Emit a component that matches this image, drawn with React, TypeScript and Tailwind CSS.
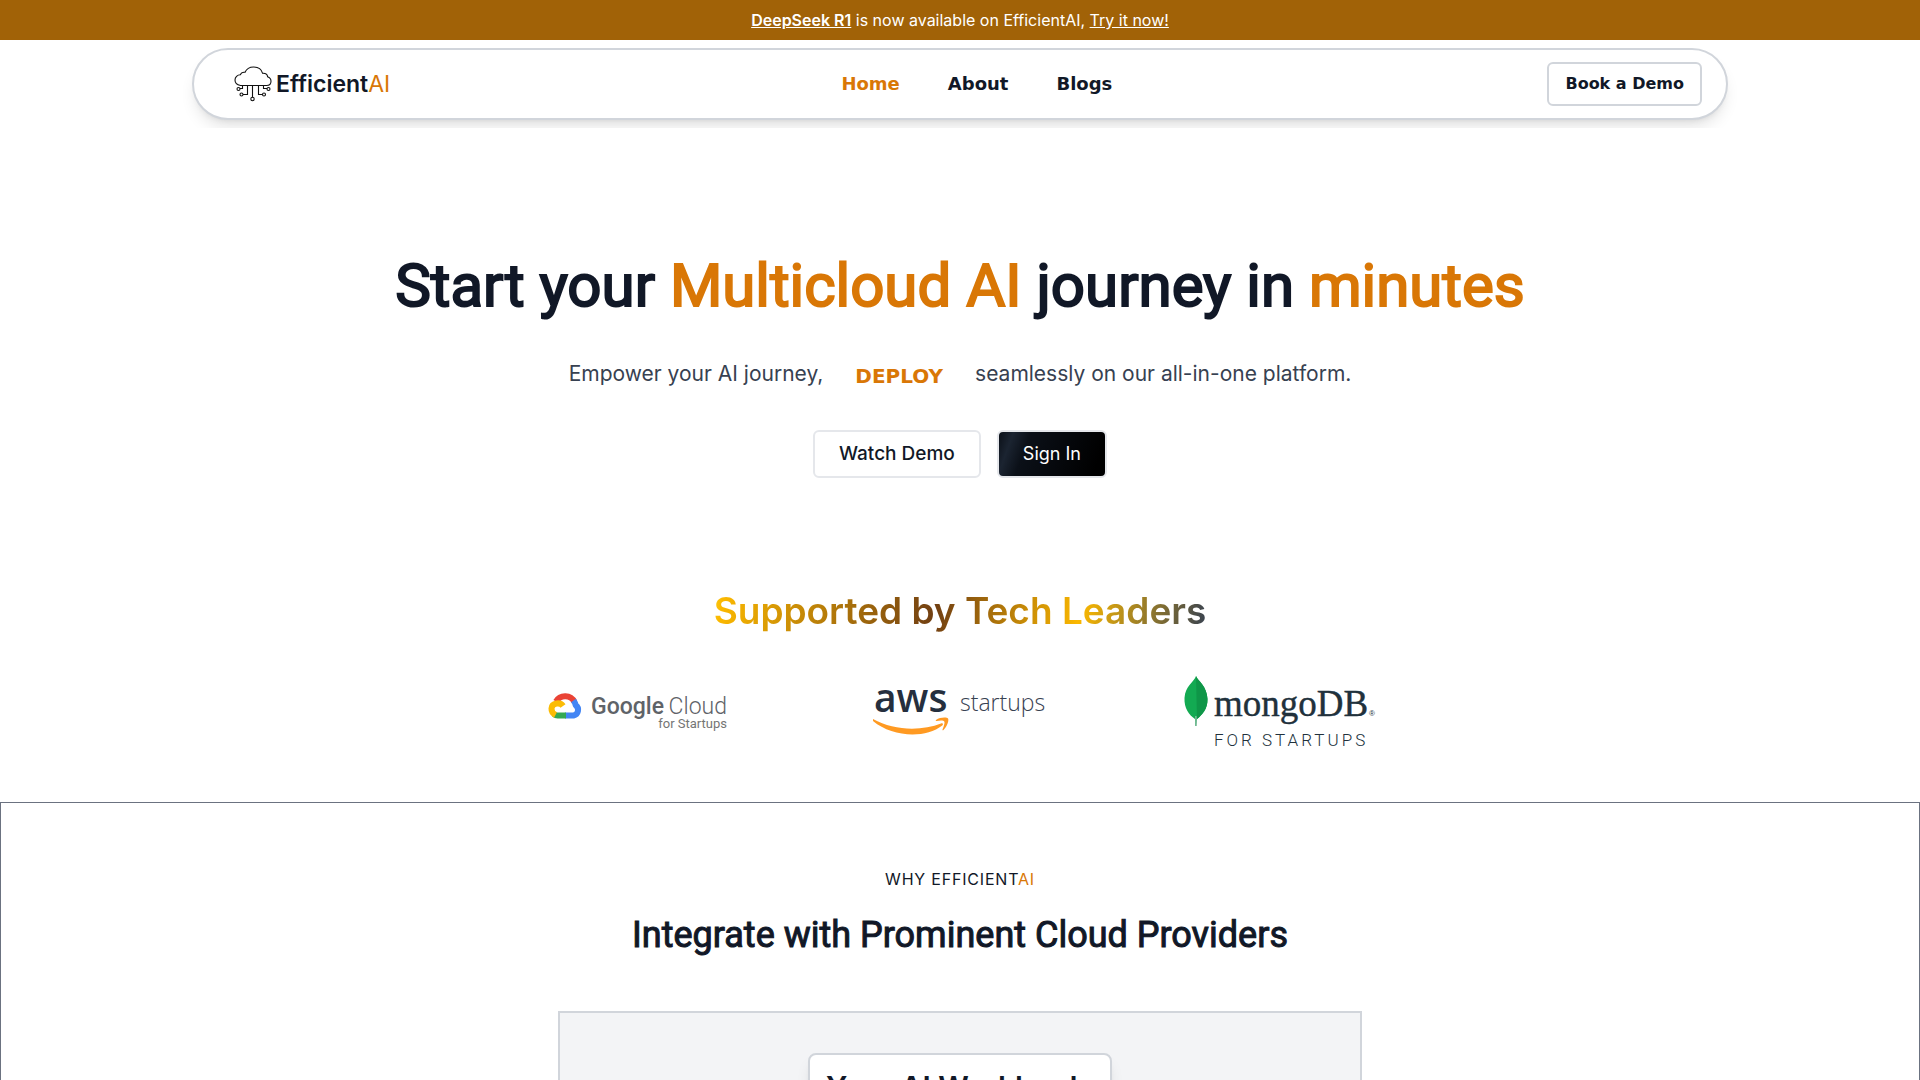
import type { ReactNode } from 'react';

const navLinks = [
  { label: 'Home', href: '#home', active: true },
  { label: 'About', href: '#about', active: false },
  { label: 'Blogs', href: '#blogs', active: false },
];

const CloudChipIcon = () => (
  <svg width="38" height="36" viewBox="0 0 38 36" fill="none" stroke="#111" strokeWidth="1.1" aria-hidden="true">
    <path d="M6.5 19.5C3 19 1 17 1 14c0-3 2.400-5.200 5.300-5.200C7 7 9 6 11 6.300 12.500 3 16 1 19.500 1c4.500 0 8 2.400 9 6.200 3.800-.2 5 2 5.100 3.600 2.200.8 3.400 2.600 3.400 4.400 0 2.600-2 4.300-4.500 4.300z" />
    <path d="M13.500 19.500v9H9M18.500 19.500v12M24.500 19.500v9h4M8.500 19.500v3H6M29.500 19.500v3H33" />
    <circle cx="4.500" cy="23" r="1.500" />
    <circle cx="7.500" cy="28.500" r="1.500" />
    <circle cx="18.500" cy="33" r="1.700" />
    <circle cx="30" cy="28.500" r="1.500" />
    <circle cx="34.500" cy="23" r="1.500" />
  </svg>
);

const Banner = () => (
  <div className="flex h-10 items-center justify-center bg-[#a16207] text-base text-white">
    <p>
      <a href="#deepseek" className="font-semibold underline">DeepSeek R1</a> is now available on EfficientAI,{' '}
      <a href="#try" className="underline">Try it now!</a>
    </p>
  </div>
);

const Header = () => (
  <header className="overflow-hidden py-2">
    <nav className="mx-auto flex h-18 w-4/5 items-center justify-between rounded-full border-2 border-[#d1d5db] bg-white pr-6 pl-10 shadow-lg">
      <a href="#home" className="flex items-center gap-1 pr-4 text-[23px] font-semibold text-[#111827]">
        <CloudChipIcon />
        <span>Efficient<span className="font-normal text-[#d97706]">AI</span></span>
      </a>
      <ul className="flex gap-12 font-['DejaVu_Sans'] text-lg font-bold">
        {navLinks.map((link) => (
          <li key={link.label}>
            <a href={link.href} className={link.active ? 'text-[#d97706]' : 'text-[#111827]'}>{link.label}</a>
          </li>
        ))}
      </ul>
      <button type="button" className="h-11 rounded-md border-2 border-[#d1d5db] px-4 font-['DejaVu_Sans'] text-base font-bold text-[#111827]">
        Book a Demo
      </button>
    </nav>
  </header>
);

const Hero = () => (
  <section id="home" className="flex flex-col items-center pt-30 text-center">
    <h1 className="font-['Roboto'] text-6xl leading-[76px] font-normal text-[#111827] [-webkit-text-stroke:2px]">
      Start your <span className="text-[#d97706]">Multicloud AI</span> journey in <span className="text-[#d97706]">minutes</span>
    </h1>
    <div className="mt-[30px] flex h-10 items-center gap-8 text-[21px] text-[#374151]">
      <span>Empower your AI journey,</span>
      <span className="pt-1 font-['DejaVu_Sans'] text-xl font-bold text-[#d97706]">DEPLOY</span>
      <span>seamlessly on our all-in-one platform.</span>
    </div>
    <div className="mt-9 flex items-center gap-4">
      <button type="button" className="h-12 rounded-md border-2 border-[#e5e7eb] px-6 text-[19px] font-medium text-[#111827]">
        Watch Demo
      </button>
      <button type="button" className="h-12 rounded-md border-2 border-[#e5e7eb] bg-[linear-gradient(110deg,#0b1018,#1b2431_12%,#0b1018_26%,#000_90%)] px-6 text-lg text-white">
        Sign In
      </button>
    </div>
  </section>
);

const GoogleCloudLogo = () => (
  <svg width="188" height="44" viewBox="0 0 188 44" role="img" aria-label="Google Cloud for Startups">
    <g fill="none" strokeWidth="6" strokeLinejoin="round">
      <path d="M8 11.500A10.500 10.500 0 0 1 26.500 12" stroke="#ea4335" />
      <path d="M25.500 10.500C27 12.500 27.500 14 27.700 15.300A5.700 5.700 0 0 1 25.500 25.500H17" stroke="#4285f4" />
      <path d="M18 25.500H9.500C8 25.500 7 25 6 24.200" stroke="#34a853" />
      <path d="M7.500 25C2 22 2 14.500 8.500 13.500c3-.5 5.500 1 6.500 2.500" stroke="#fbbc05" />
    </g>
    <text x="43" y="24" fontFamily="Roboto" fontSize="23" fontWeight="500" fill="#5f6368">Google</text>
    <text x="179" y="24" textAnchor="end" fontFamily="Roboto" fontSize="23" fontWeight="300" fill="#5f6368">Cloud</text>
    <text x="179" y="38" textAnchor="end" fontFamily="Roboto" fontSize="13" fill="#757575">for Startups</text>
  </svg>
);

const AwsLogo = () => (
  <svg width="176" height="50" viewBox="0 0 176 50" role="img" aria-label="AWS startups">
    <text x="2" y="25" fontFamily="Open Sans" fontSize="39" fontWeight="600" fill="#252f3e">aws</text>
    <path d="M1 32C22 44 50 44 69 36.500c1.500-.8 2.800.8 1.300 2C53 52 20 50 1 34z" fill="#ff9a22" />
    <path d="M64 33c4-3 11-3 12-1.500 1.200 1.700-.8 8-4.500 11.500-.7.600-1.300.2-1-.6 1-2.500 2.600-6.600 1.800-8-.9-1.200-5-.8-7.500-.4-.9.100-1.400-.5-.8-1z" fill="#ff9a22" />
    <text x="88" y="24" fontFamily="Open Sans" fontSize="23" fontWeight="300" fill="#374151">startups</text>
  </svg>
);

const MongoLogo = () => (
  <svg width="188" height="72" viewBox="0 0 188 72" className="overflow-visible" role="img" aria-label="MongoDB for startups">
    <path d="M12 0C14 5 23 10 23.500 23 23.800 33 18 39 13 43L12.600 50h-1.400L11 43C5 39 0 32 .5 22 1.200 10 10 6 12 0z" fill="#13aa52" />
    <path d="M12 0C14 5 23 10 23.500 23 23.800 33 18 39 13 43z" fill="#0f9648" />
    <path d="M11.400 40h1l.2 10h-1z" fill="#b8c4c2" />
    <text x="30" y="40" fontFamily="Liberation Serif" fontSize="37" fill="#21313c" stroke="#21313c" strokeWidth=".4">mongoDB</text>
    <text x="185" y="40" fontFamily="Liberation Sans" fontSize="8" fill="#21313c">®</text>
    <text x="30" y="70" fontFamily="Roboto" fontSize="17" fontWeight="300" letterSpacing="3" fill="#21313c">FOR STARTUPS</text>
  </svg>
);

const Supporters = () => (
  <section className="mt-28 flex flex-col items-center pb-[54px]">
    <h2 className="bg-[linear-gradient(100deg,#facc15,#fbb800_2%,#713f12_45%,#fbb800_74%,#374151)] bg-clip-text text-[37px] leading-[42px] font-semibold text-transparent">
      Supported by Tech Leaders
    </h2>
    <div className="mt-11 flex items-center justify-center gap-34">
      <GoogleCloudLogo />
      <AwsLogo />
      <MongoLogo />
    </div>
  </section>
);

const Panel = ({ children }: { children: ReactNode }) => (
  <div className="mt-14 flex w-full max-w-[804px] justify-center border-2 border-[#d1d5db] bg-[#f3f4f6] py-10">{children}</div>
);

const WhySection = () => (
  <section id="about" className="flex flex-col items-center border border-[#6b7280] pt-16 pb-16 text-center">
    <p className="text-base tracking-wider text-[#111827] uppercase">
      Why Efficient<span className="text-[#d97706]">AI</span>
    </p>
    <h2 className="mt-6 font-['Roboto'] text-4xl font-normal text-[#111827] [-webkit-text-stroke:1px]">
      Integrate with Prominent Cloud Providers
    </h2>
    <Panel>
      <div className="rounded-lg border-2 border-[#d1d5db] bg-white px-4 py-3.5 shadow-lg">
        <h3 className="text-3xl font-semibold text-[#111827]">Your AI Workloads</h3>
      </div>
    </Panel>
  </section>
);

export default function App() {
  return (
    <div className="bg-white font-['Inter',sans-serif]">
      <Banner />
      <Header />
      <main>
        <Hero />
        <Supporters />
        <WhySection />
      </main>
    </div>
  );
}
